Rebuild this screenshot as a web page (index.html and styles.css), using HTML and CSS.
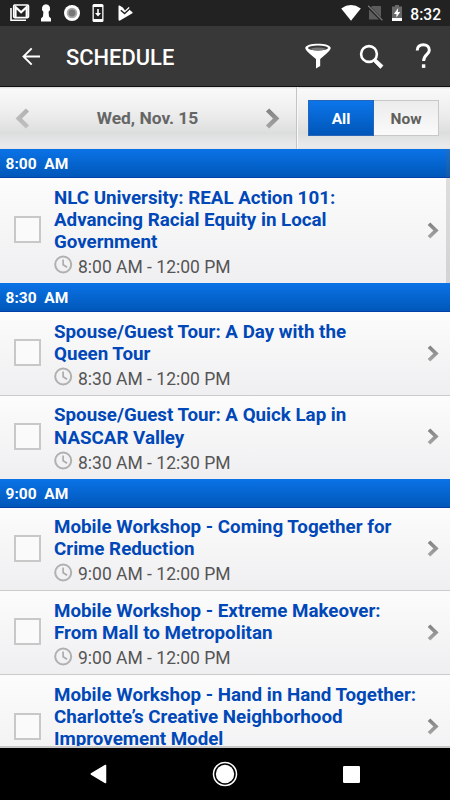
FILE: index.html
```
<!DOCTYPE html>
<html lang="en">
<head>
  <meta charset="UTF-8">
  <meta name="viewport" content="width=device-width, initial-scale=1.0">
  <title>Schedule</title>
  <link rel="stylesheet" href="styles.css">
</head>
<body>
  <!-- shared icons -->
  <svg class="defs" width="0" height="0">
    <linearGradient id="grey" x1="0" y1="0" x2="0" y2="1">
      <stop offset="0" stop-color="#808080"/>
      <stop offset="1" stop-color="#a6a6a6"/>
    </linearGradient>
    <symbol id="chevron" viewBox="0 0 12 17">
      <path d="M0.7 2.9 3.3 0.4 11.6 8.5 3.3 16.6 0.7 14.1 6.4 8.5Z" fill="url(#grey)"/>
    </symbol>
    <symbol id="clock" viewBox="0 0 19 19">
      <circle cx="9.2" cy="9.5" r="8" fill="none" stroke="#b0b0b0" stroke-width="2"/>
      <path d="M9.1 4.5V9.8L13.1 12.2" fill="none" stroke="#a9a9a9" stroke-width="1.6"/>
    </symbol>
  </svg>

  <div class="status-bar">
    <div class="status-icons">
      <svg width="20" height="18" viewBox="0 0 20 18">
        <path d="M1 4V16.3H16" fill="none" stroke="#fff" stroke-width="1.6"/>
        <rect x="3.7" y="1" width="14.8" height="12.6" rx="1" fill="none" stroke="#fff" stroke-width="1.6"/>
        <path d="M5.5 13V3L11.1 8.2 16.7 3V13" fill="none" stroke="#fff" stroke-width="2.2"/>
      </svg>
      <svg width="12" height="18" viewBox="0 0 12 18">
        <path d="M6 0.3A4.2 4.2 0 0 1 8.6 7.7L9 12.5 11 14.5V17.6H1V14.5L3 12.5 3.4 7.7A4.2 4.2 0 0 1 6 0.3Z" fill="#fff"/>
      </svg>
      <svg width="16" height="18" viewBox="0 0 16 18">
        <circle cx="8" cy="9" r="8" fill="#fff"/>
        <circle cx="8" cy="9" r="5.3" fill="#aaa"/>
        <circle cx="8" cy="9" r="3.4" fill="#777"/>
      </svg>
      <svg width="12" height="18" viewBox="0 0 12 18">
        <rect x="0.5" y="0" width="11" height="18" rx="1.5" fill="#fff"/>
        <rect x="1.8" y="3" width="8.4" height="12" fill="#222"/>
        <path d="M5.2 5H6.8V9H9L6 12.5 3 9H5.2Z" fill="#fff"/>
      </svg>
      <svg width="15" height="16" viewBox="0 0 15 16">
        <path d="M0.5 1Q0.5 0 1.6 0.6L4.8 2.4 7 5.5 11 1.8 12.3 5.5 14.6 7.2Q14.8 8 14 8.5L2 15.5Q0.4 16 0.5 14.5Z" fill="#fff"/>
        <path d="M2.8 5.3 6.6 8.6 12.6 3" fill="none" stroke="#222" stroke-width="1.4"/>
      </svg>
    </div>
    <div class="status-right">
      <svg width="20" height="16" viewBox="0 0 20 16">
        <path d="M0.2 3.4Q10 -3.2 19.8 3.4L10 15.8Z" fill="#fff"/>
      </svg>
      <svg width="15" height="16" viewBox="0 0 15 16">
        <path d="M4 1H13V14.5H1V5Z" fill="#5c5c5c"/>
        <path d="M0 1.3 14.3 15.6" stroke="#222" stroke-width="3"/>
        <path d="M0.2 0.8 14.4 15.3" stroke="#747474" stroke-width="1.3"/>
      </svg>
      <svg width="10" height="16" viewBox="0 0 10 16">
        <path d="M3 0H7V1.6H10V16H0V1.6H3Z" fill="#686868"/>
        <path d="M0 13H10V16H0Z" fill="#fff"/>
        <path d="M6.2 3 1.9 8.9H4.4V12.5L8.2 7H5.8Z" fill="#fff"/>
      </svg>
      <span class="clock">8:32</span>
    </div>
  </div>

  <div class="app-bar">
    <svg class="back" width="19" height="19" viewBox="0 0 19 19">
      <path d="M18 9.5H2M9.7 1.3 1.5 9.5 9.7 17.7" fill="none" stroke="#fff" stroke-width="1.9"/>
    </svg>
    <h1>SCHEDULE</h1>
    <div class="actions">
      <svg width="26" height="26" viewBox="0 0 26 26">
        <path d="M0.3 5C0.3-0.8 25.7-0.8 25.7 5 25.7 7.5 21 11 15.2 16V23L11 25.5V16C5 11 0.3 7.5 0.3 5Z" fill="#fff"/>
        <ellipse cx="13" cy="5" rx="10" ry="2.6" fill="#383838"/>
        <path d="M4.5 5.9Q13 3.2 21.5 5.9Q13 9 4.5 5.9" fill="#777"/>
      </svg>
      <svg width="25" height="25" viewBox="0 0 25 25">
        <circle cx="10" cy="10" r="7.9" fill="none" stroke="#fff" stroke-width="2.6"/>
        <path d="M15.5 15.2 17.2 15.2 24 21.5 21.4 24.4 15 18V15.2Z" fill="#fff" stroke="#fff" stroke-width="0.7"/>
      </svg>
      <svg width="17" height="26" viewBox="0 0 17 26">
        <path d="M2.2 7.5C2.2 3.8 4.8 1.7 8.3 1.7S14.3 3.7 14.3 7.2C14.3 11.3 8.6 11.7 8.6 18" fill="none" stroke="#fff" stroke-width="3"/>
        <rect x="6.9" y="21.3" width="3.4" height="3.6" fill="#fff"/>
      </svg>
    </div>
  </div>

  <div class="toolbar">
    <div class="day-picker">
      <svg class="prev" width="15" height="21"><use href="#chevron"/></svg>
      <span class="date">Wed, Nov. 15</span>
      <svg class="next" width="15" height="21"><use href="#chevron"/></svg>
    </div>
    <div class="filter">
      <div class="tab active">All</div>
      <div class="tab">Now</div>
    </div>
  </div>

  <div class="schedule">
    <div class="scrollbar"></div>

    <div class="time-header">8:00 &nbsp;AM</div>
    <div class="session">
      <span class="checkbox"></span>
      <div class="info">
        <div class="title">NLC University: REAL Action 101:<br>Advancing Racial Equity in Local<br>Government</div>
        <div class="time"><svg width="19" height="19"><use href="#clock"/></svg>8:00 AM - 12:00 PM</div>
      </div>
      <svg class="arrow" width="12" height="17"><use href="#chevron"/></svg>
    </div>

    <div class="time-header">8:30 &nbsp;AM</div>
    <div class="session">
      <span class="checkbox"></span>
      <div class="info">
        <div class="title">Spouse/Guest Tour: A Day with the<br>Queen Tour</div>
        <div class="time"><svg width="19" height="19"><use href="#clock"/></svg>8:30 AM - 12:00 PM</div>
      </div>
      <svg class="arrow" width="12" height="17"><use href="#chevron"/></svg>
    </div>
    <div class="session">
      <span class="checkbox"></span>
      <div class="info">
        <div class="title">Spouse/Guest Tour: A Quick Lap in<br>NASCAR Valley</div>
        <div class="time"><svg width="19" height="19"><use href="#clock"/></svg>8:30 AM - 12:30 PM</div>
      </div>
      <svg class="arrow" width="12" height="17"><use href="#chevron"/></svg>
    </div>

    <div class="time-header">9:00 &nbsp;AM</div>
    <div class="session">
      <span class="checkbox"></span>
      <div class="info">
        <div class="title">Mobile Workshop - Coming Together for<br>Crime Reduction</div>
        <div class="time"><svg width="19" height="19"><use href="#clock"/></svg>9:00 AM - 12:00 PM</div>
      </div>
      <svg class="arrow" width="12" height="17"><use href="#chevron"/></svg>
    </div>
    <div class="session">
      <span class="checkbox"></span>
      <div class="info">
        <div class="title">Mobile Workshop - Extreme Makeover:<br>From Mall to Metropolitan</div>
        <div class="time"><svg width="19" height="19"><use href="#clock"/></svg>9:00 AM - 12:00 PM</div>
      </div>
      <svg class="arrow" width="12" height="17"><use href="#chevron"/></svg>
    </div>
    <div class="session tall">
      <span class="checkbox"></span>
      <div class="info">
        <div class="title">Mobile Workshop - Hand in Hand Together:<br>Charlotte’s Creative Neighborhood<br>Improvement Model</div>
      </div>
      <svg class="arrow" width="12" height="17"><use href="#chevron"/></svg>
    </div>
  </div>

  <div class="nav-bar">
    <svg width="17" height="20" viewBox="0 0 17 20">
      <path d="M15.5 1.5V18.5L1.3 10Z" fill="#fff" stroke="#fff" stroke-width="1.5" stroke-linejoin="round"/>
    </svg>
    <svg width="26" height="26" viewBox="0 0 26 26">
      <circle cx="13" cy="13" r="11.5" fill="none" stroke="#fff" stroke-width="1.5"/>
      <circle cx="13" cy="13" r="9.2" fill="#fff"/>
    </svg>
    <svg width="17" height="17" viewBox="0 0 17 17">
      <rect width="17" height="17" rx="1.2" fill="#fff"/>
    </svg>
  </div>
</body>
</html>
```
FILE: styles.css
```
* {
  box-sizing: border-box;
}

body {
  margin: 0;
  width: 450px;
  height: 800px;
  display: flex;
  flex-direction: column;
  overflow: hidden;
  font-family: Roboto, sans-serif;
  background-color: #000;
}

svg {
  display: block;
  flex: none;
}

.defs {
  position: absolute;
}

.status-bar {
  flex: none;
  height: 26px;
  padding: 0 9px 0 10px;
  display: flex;
  justify-content: space-between;
  background-color: #222;
  color: #fff;
}

.status-icons,
.status-right {
  display: flex;
  align-items: center;
}

.status-icons {
  gap: 10px;
}

.status-icons svg:nth-child(3) {
  margin-left: 2px;
}

.status-icons svg:nth-child(4) {
  margin-left: 2px;
}

.status-icons svg:nth-child(5) {
  margin-left: 4px;
}

.status-right svg:nth-child(1) {
  margin-right: 7px;
}

.status-right svg:nth-child(2) {
  margin-right: 9px;
}

.clock {
  margin-left: 8px;
  padding-top: 3px;
  font-size: 15.6px;
  font-weight: 500;
}

.app-bar {
  flex: none;
  height: 61px;
  padding: 0 18px 0 22px;
  display: flex;
  align-items: center;
  background-color: #383838;
  border-bottom: 1px solid #111;
  color: #fff;
}

h1 {
  margin: 3px 0 0 25px;
  font-size: 21.9px;
  font-weight: 500;
}

.actions {
  margin-left: auto;
  display: flex;
  align-items: center;
  gap: 28px;
}

.actions svg:last-child {
  margin-left: 3px;
}

.toolbar {
  flex: none;
  height: 62px;
  display: flex;
  background: linear-gradient(#d6d6d6 0, #f9f9f9 2px, #ececec 28px, #dcdedd 46px, #ebebed 60px, #e2e2e2 62px);
}

.day-picker {
  width: 297px;
  padding: 0 16px 0 15px;
  display: flex;
  justify-content: space-between;
  align-items: center;
  border-right: 1px solid #c4c4c4;
}

.prev {
  transform: scaleX(-1);
  opacity: 0.55;
}

.date {
  font-size: 17.4px;
  font-weight: 700;
  color: #666;
}

.filter {
  flex: 1;
  padding: 13px 11px 0 10px;
  display: flex;
  border-left: 1px solid #f8f8f8;
}

.tab {
  flex: 1;
  height: 36px;
  line-height: 36px;
  text-align: center;
  font-size: 15.5px;
  font-weight: 700;
  color: #605f5b;
  background: linear-gradient(#ececec, #fafafa);
  border: 1px solid #c8c8c8;
  border-left: 0;
}

.tab.active {
  color: #fff;
  background: linear-gradient(#0c75ea, #0056b8);
  border: 1px solid #2665b8;
}

.schedule {
  position: relative;
  flex: 1;
  min-height: 0;
  overflow: hidden;
  border-bottom: 2px solid #c8c8c8;
}

.scrollbar {
  position: absolute;
  top: 0;
  right: 0;
  width: 4px;
  height: 134px;
  background-color: rgba(100, 100, 100, 0.2);
}

.time-header {
  height: 29px;
  padding-left: 5.5px;
  line-height: 30px;
  font-size: 15.5px;
  font-weight: 700;
  color: #fff;
  background: linear-gradient(#0b73e7, #0057b9);
  border-bottom: 1px solid #003fa9;
}

.session {
  padding: 8.7px 11px 2.3px 14px;
  display: flex;
  align-items: center;
  background: linear-gradient(#fcfcfc, #efeff1);
}

.session + .session {
  border-top: 1px solid #cbcbcb;
}

/* runs past the bottom of the list */
.session.tall {
  height: 105px;
}

.session.tall .info {
  align-self: flex-start;
}

.checkbox {
  flex: none;
  width: 27px;
  height: 27px;
  margin: 0 13px 8px 0;
  border: 2px solid #c8c8c8;
  background-color: #fafafa;
}

.info {
  flex: 1;
  white-space: nowrap;
}

.title {
  font-size: 18.75px;
  line-height: 22.2px;
  font-weight: 700;
  color: #0047b8;
}

.time {
  height: 27.4px;
  display: flex;
  align-items: center;
  gap: 5px;
  font-size: 17.5px;
  color: #555;
}

.time svg {
  margin-top: -4px;
}

.arrow {
  margin-bottom: 7px;
}

.nav-bar {
  flex: none;
  height: 52px;
  padding: 0 90px;
  display: flex;
  justify-content: space-between;
  align-items: center;
  background-color: #000;
}
```
